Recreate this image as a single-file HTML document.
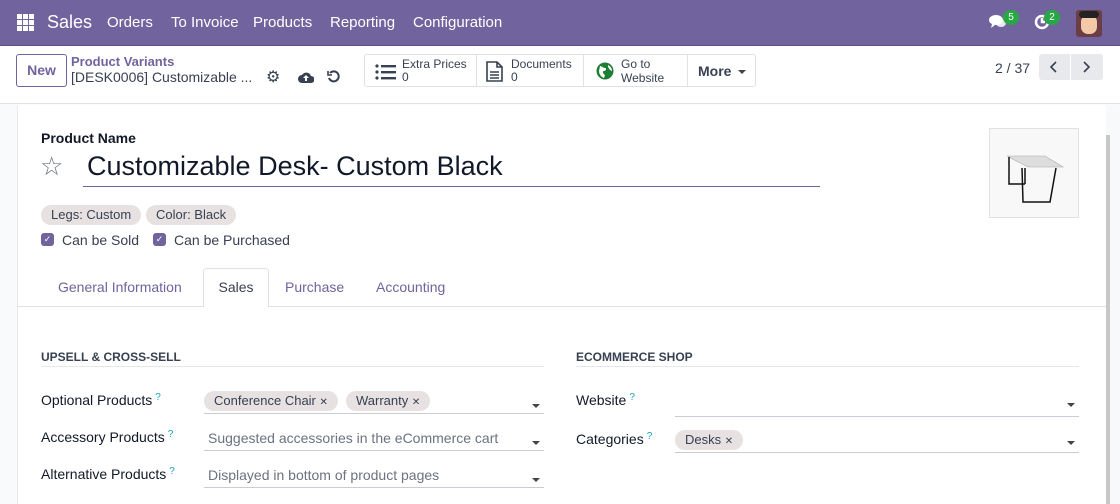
<!DOCTYPE html>
<html><head><meta charset="utf-8"><style>
*{box-sizing:border-box;margin:0;padding:0}
body{width:1120px;height:504px;overflow:hidden;font-family:"Liberation Sans",sans-serif;font-size:14px;color:#212529;background:#f9fafb;position:relative}
.a{position:absolute}
.nav{left:0;top:0;width:1120px;height:46px;background:#71639e;color:#fff;border-bottom:1px solid #5b4f85}
.nav span{position:absolute;top:14px;font-size:15px}
.cp{left:0;top:46px;width:1120px;height:58px;background:#fff;border-bottom:1px solid #dee2e6}
.sheet{left:17px;top:105px;width:1089px;height:399px;background:#fff;border-left:1px solid #e7e9ed}
.tag{position:absolute;background:#e7e1e1;border-radius:11px;font-size:13px;color:#374151;padding:0 10px;height:20px;line-height:20px}
.lbl{position:absolute;font-size:14px;color:#111827}
.q{color:#17a2b8;font-size:10px;vertical-align:top;margin-left:3px}
.ul{position:absolute;height:1px;background:#c9ccd2}
.caret{position:absolute;width:0;height:0;border-left:4px solid transparent;border-right:4px solid transparent;border-top:4px solid #444}
.ph{position:absolute;color:#6b7280;font-size:14px}
.cb{position:absolute;width:13px;height:13px;background:#71639e;border-radius:3px;color:#fff;font-size:9px;line-height:13px;text-align:center}
.btn{position:absolute;border:1px solid #dee2e6;height:33px;top:54px;background:#fff}
</style></head><body>
<div class="a nav">
 <svg class="a" style="left:17px;top:14px" width="17" height="17" viewBox="0 0 17 17" fill="#fff">
  <rect x="0" y="0" width="5" height="5"/><rect x="6" y="0" width="5" height="5"/><rect x="12" y="0" width="5" height="5"/>
  <rect x="0" y="6" width="5" height="5"/><rect x="6" y="6" width="5" height="5"/><rect x="12" y="6" width="5" height="5"/>
  <rect x="0" y="12" width="5" height="5"/><rect x="6" y="12" width="5" height="5"/><rect x="12" y="12" width="5" height="5"/></svg>
 <span style="left:47px;top:12px;font-size:18px">Sales</span>
 <span style="left:107px">Orders</span>
 <span style="left:171px">To Invoice</span>
 <span style="left:253px">Products</span>
 <span style="left:330px">Reporting</span>
 <span style="left:413px">Configuration</span>
 <svg class="a" style="left:989px;top:14px" width="18" height="16" viewBox="0 0 18 16" fill="#fff"><ellipse cx="7" cy="6" rx="7" ry="5"/><path d="M3 10l-1 4 4-3z"/><ellipse cx="12" cy="9" rx="5" ry="4" opacity=".85"/></svg>
 <div class="a" style="left:1003px;top:10px;width:16px;height:15px;border-radius:8px;background:#28a745;font-size:10px;text-align:center;line-height:15px">5</div>
 <svg class="a" style="left:1034px;top:14px" width="16" height="16" viewBox="0 0 16 16" fill="none" stroke="#fff" stroke-width="2.5"><circle cx="8" cy="8" r="6"/><path d="M8 4v4h3"/></svg>
 <div class="a" style="left:1044px;top:10px;width:16px;height:15px;border-radius:8px;background:#28a745;font-size:10px;text-align:center;line-height:15px">2</div>
 <div class="a" style="left:1076px;top:10px;width:26px;height:27px;border-radius:3px;background:#6b3d45"><div class="a" style="left:5px;top:5px;width:16px;height:19px;border-radius:7px;background:#f3c9a8"></div><div class="a" style="left:3px;top:1px;width:20px;height:7px;border-radius:4px;background:#222"></div></div>
</div>
<div class="a cp">
 <div class="a" style="left:16px;top:8px;width:51px;height:33px;border:1px solid #71639e;border-radius:3px;color:#71639e;text-align:center;line-height:31px;font-size:14px;font-weight:bold">New</div>
 <div class="a" style="left:71px;top:8px;color:#71639e;font-size:13px;font-weight:bold">Product Variants</div>
 <div class="a" style="left:71px;top:23px;font-size:14px;color:#374151">[DESK0006] Customizable ...</div>
 <div class="a" style="left:266px;top:21px;font-size:16px;color:#374151">⚙</div>
 <svg class="a" style="left:298px;top:25px" width="16" height="12" viewBox="0 0 16 12"><path d="M4 12a4 4 0 0 1 0-8 5 5 0 0 1 9 1 3.5 3.5 0 0 1 0 7z" fill="#374151"/><path d="M8 4l3 3H9v3H7V7H5z" fill="#fff"/></svg>
 <svg class="a" style="left:327px;top:24px" width="13" height="13" viewBox="0 0 13 13" fill="none" stroke="#374151" stroke-width="2"><path d="M3 3A5 5 0 1 1 2 8"/><path d="M1 1v4h4" stroke-width="1.6"/></svg>
</div>
<div class="btn" style="left:364px;width:113px;border-radius:3px 0 0 3px"><svg class="a" style="left:10px;top:9px" width="22" height="16" viewBox="0 0 22 16" fill="#374151"><circle cx="2" cy="2" r="1.6"/><circle cx="2" cy="8" r="1.6"/><circle cx="2" cy="14" r="1.6"/><rect x="6" y="1" width="15" height="2.4"/><rect x="6" y="7" width="15" height="2.4"/><rect x="6" y="13" width="15" height="2.4"/></svg><div class="a" style="left:37px;top:3px;font-size:12px;line-height:13px;color:#374151">Extra Prices<br>0</div></div>
<div class="btn" style="left:476px;width:108px"><svg class="a" style="left:9px;top:6px" width="17" height="21" viewBox="0 0 17 21" fill="none" stroke="#374151" stroke-width="1.6"><path d="M1 1h10l5 5v14H1z"/><path d="M11 1v5h5M4 11h9M4 14h9M4 17h9"/></svg><div class="a" style="left:34px;top:3px;font-size:12px;line-height:13px;color:#374151">Documents<br>0</div></div>
<div class="btn" style="left:583px;width:105px"><svg class="a" style="left:12px;top:7px" width="18" height="18" viewBox="0 0 18 18"><circle cx="9" cy="9" r="8.5" fill="#1e7e34"/><path d="M4 4c2 0 3 2 5 2s1 3 -1 3-1 3 1 4l-1 3c-3-1-5-4-5-7z M12 3c2 1 4 3 4 6l-2-1-2-3z" fill="#fff"/></svg><div class="a" style="left:37px;top:2px;font-size:12px;line-height:14px;color:#374151">Go to<br>Website</div></div>
<div class="btn" style="left:687px;width:69px;border-radius:0 3px 3px 0"><div class="a" style="left:10px;top:8px;font-size:14px;color:#374151;font-weight:bold">More</div><div class="caret" style="left:50px;top:15px"></div></div>
<div class="a" style="left:995px;top:60px;font-size:14px;color:#374151">2 / 37</div>
<div class="a" style="left:1039px;top:54px;width:31px;height:26px;background:#e7e9ed;border-radius:3px 0 0 3px"><svg class="a" style="left:10px;top:7px" width="8" height="12" viewBox="0 0 8 12" fill="none" stroke="#374151" stroke-width="1.6"><path d="M7 1L2 6l5 5"/></svg></div>
<div class="a" style="left:1071px;top:54px;width:32px;height:26px;background:#e7e9ed;border-radius:0 3px 3px 0"><svg class="a" style="left:12px;top:7px" width="8" height="12" viewBox="0 0 8 12" fill="none" stroke="#374151" stroke-width="1.6"><path d="M1 1l5 5-5 5"/></svg></div>

<div class="a sheet"></div>
<div class="a" style="left:1106px;top:105px;width:14px;height:399px;background:#f8f9fa"></div>
<div class="a" style="left:1106px;top:135px;width:4px;height:369px;background:#c7c7c7"></div>

<div class="a" style="left:41px;top:130px;font-size:14px;font-weight:bold;color:#111827">Product Name</div>
<div class="a" style="left:40px;top:151px;font-size:26px;color:#6b7280">☆</div>
<div class="a" style="left:87px;top:151px;font-size:27px;color:#111827">Customizable Desk- Custom Black</div>
<div class="a" style="left:83px;top:186px;width:737px;height:1px;background:#71639e"></div>
<div class="a" style="left:989px;top:128px;width:90px;height:90px;border:1px solid #dee2e6;background:#f8f8f8">
 <svg class="a" style="left:0;top:0" width="90" height="90" viewBox="0 0 90 90"><path d="M17 27l38 0 18 11-35 0z" fill="#ddd" stroke="#aaa" stroke-width=".6"/><path d="M19 28v27h16M35 39v16M32 39l1 34h27l6-34" stroke="#111" stroke-width="1.5" fill="none"/></svg>
</div>
<div class="tag" style="left:41px;top:205px;color:#374151">Legs: Custom</div>
<div class="tag" style="left:146px;top:205px;color:#374151">Color: Black</div>
<div class="cb" style="left:41px;top:233px">✓</div><div class="a" style="left:62px;top:232px;color:#374151">Can be Sold</div>
<div class="cb" style="left:153px;top:233px">✓</div><div class="a" style="left:174px;top:232px;color:#374151">Can be Purchased</div>

<div class="a" style="left:17px;top:306px;width:1089px;height:1px;background:#dee2e6"></div>
<div class="a" style="left:58px;top:279px;color:#71639e">General Information</div>
<div class="a" style="left:203px;top:268px;width:66px;height:39px;background:#fff;border:1px solid #dee2e6;border-bottom:none;border-radius:3px 3px 0 0;text-align:center;line-height:37px;color:#374151">Sales</div>
<div class="a" style="left:285px;top:279px;color:#71639e">Purchase</div>
<div class="a" style="left:376px;top:279px;color:#71639e">Accounting</div>

<div class="a" style="left:41px;top:350px;font-size:12px;font-weight:bold;color:#374151">UPSELL &amp; CROSS-SELL</div>
<div class="a" style="left:41px;top:366px;width:503px;height:1px;background:#e5e7eb"></div>
<div class="lbl" style="left:41px;top:392px">Optional Products<span class="q">?</span></div>
<div class="tag" style="left:204px;top:391px">Conference Chair <span style="font-size:10px">✕</span></div>
<div class="tag" style="left:346px;top:391px">Warranty <span style="font-size:10px">✕</span></div>
<div class="caret" style="left:532px;top:404px"></div><div class="ul" style="left:204px;top:413px;width:340px"></div>
<div class="lbl" style="left:41px;top:429px">Accessory Products<span class="q">?</span></div>
<div class="ph" style="left:208px;top:430px">Suggested accessories in the eCommerce cart</div>
<div class="caret" style="left:532px;top:441px"></div><div class="ul" style="left:204px;top:450px;width:340px"></div>
<div class="lbl" style="left:41px;top:466px">Alternative Products<span class="q">?</span></div>
<div class="ph" style="left:208px;top:467px">Displayed in bottom of product pages</div>
<div class="caret" style="left:532px;top:478px"></div><div class="ul" style="left:204px;top:487px;width:340px"></div>

<div class="a" style="left:576px;top:350px;font-size:12px;font-weight:bold;color:#374151">ECOMMERCE SHOP</div>
<div class="a" style="left:576px;top:366px;width:503px;height:1px;background:#e5e7eb"></div>
<div class="lbl" style="left:576px;top:392px">Website<span class="q">?</span></div>
<div class="caret" style="left:1067px;top:403px"></div><div class="ul" style="left:675px;top:416px;width:404px"></div>
<div class="lbl" style="left:576px;top:431px">Categories<span class="q">?</span></div>
<div class="tag" style="left:675px;top:430px">Desks <span style="font-size:10px">✕</span></div>
<div class="caret" style="left:1067px;top:441px"></div><div class="ul" style="left:675px;top:452px;width:404px"></div>
</body></html>
